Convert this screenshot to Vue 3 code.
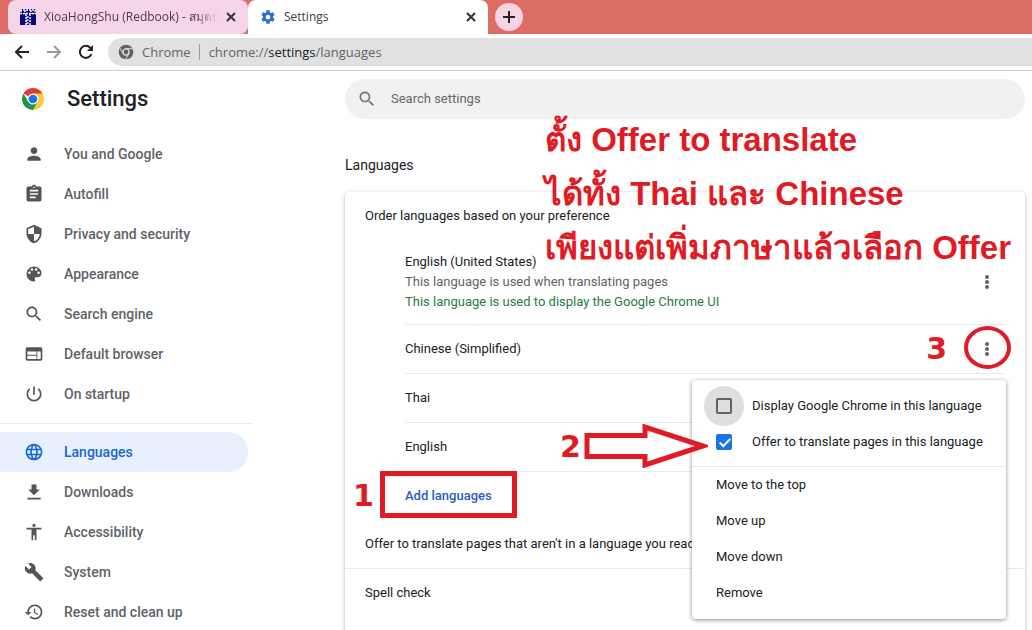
<script setup>
import { ref } from 'vue'

const primary = [
  { label: 'You and Google', d: 'M12 12c2.21 0 4-1.79 4-4s-1.79-4-4-4-4 1.79-4 4 1.79 4 4 4zm0 2c-2.67 0-8 1.34-8 4v2h16v-2c0-2.66-5.33-4-8-4z' },
  { label: 'Autofill', d: 'M19 3h-4.18C14.4 1.84 13.3 1 12 1c-1.3 0-2.4.84-2.82 2H5c-1.1 0-2 .9-2 2v14c0 1.1.9 2 2 2h14c1.1 0 2-.9 2-2V5c0-1.1-.9-2-2-2zm-7 0c.55 0 1 .45 1 1s-.45 1-1 1-1-.45-1-1 .45-1 1-1zm2 14H7v-2h7v2zm3-4H7v-2h10v2zm0-4H7V7h10v2z' },
  { label: 'Privacy and security', d: 'M12 1L3 5v6c0 5.55 3.84 10.74 9 12 5.16-1.26 9-6.45 9-12V5l-9-4zm0 10.99h7c-.53 4.12-3.28 7.79-7 8.94V12H5V6.3l7-3.11v8.8z' },
  { label: 'Appearance', d: 'M12 3c-4.97 0-9 4.03-9 9s4.03 9 9 9c.83 0 1.5-.67 1.5-1.5 0-.39-.15-.74-.39-1.01-.23-.26-.38-.61-.38-.99 0-.83.67-1.5 1.5-1.5H16c2.76 0 5-2.24 5-5 0-4.42-4.03-8-9-8zm-5.5 9c-.83 0-1.5-.67-1.5-1.5S5.67 9 6.500 9 8 9.67 8 10.500 7.330 12 6.500 12zm3-4C8.670 8 8 7.330 8 6.500S8.670 5 9.500 5s1.500.67 1.500 1.500S10.330 8 9.500 8zm5 0c-.83 0-1.500-.67-1.500-1.500S13.670 5 14.500 5s1.500.67 1.500 1.500S15.330 8 14.500 8zm3 4c-.83 0-1.500-.67-1.500-1.500S16.670 9 17.500 9s1.500.67 1.500 1.500-.67 1.500-1.500 1.500z' },
  { label: 'Search engine', d: 'M15.5 14h-.79l-.28-.27C15.41 12.59 16 11.11 16 9.5 16 5.91 13.09 3 9.5 3S3 5.91 3 9.5 5.91 16 9.5 16c1.61 0 3.09-.59 4.23-1.57l.27.28v.79l5 4.99L20.49 19l-4.99-5zm-6 0C7.01 14 5 11.99 5 9.5S7.01 5 9.5 5 14 7.01 14 9.5 11.99 14 9.500 14z' },
  { label: 'Default browser', d: 'M20 4H4c-1.100 0-1.990.9-1.990 2L2 18c0 1.100.9 2 2 2h16c1.100 0 2-.9 2-2V6c0-1.100-.9-2-2-2zm-5 14H4v-4h11v4zm0-5H4V9h11v4zm5 5h-4V9h4v9z' },
  { label: 'On startup', d: 'M13 3h-2v10h2V3zm4.830 2.170l-1.420 1.420C17.990 7.860 19 9.810 19 12c0 3.870-3.130 7-7 7s-7-3.130-7-7c0-2.190 1.010-4.140 2.580-5.420L6.170 5.170C4.230 6.820 3 9.260 3 12c0 4.970 4.030 9 9 9s9-4.030 9-9c0-2.740-1.230-5.180-3.170-6.830z' },
]
const advanced = [
  { label: 'Languages', active: true, d: 'M11.99 2C6.47 2 2 6.48 2 12s4.47 10 9.99 10C17.52 22 22 17.52 22 12S17.52 2 11.99 2zm6.93 6h-2.95c-.32-1.25-.78-2.45-1.38-3.56 1.84.63 3.37 1.91 4.33 3.56zM12 4.04c.83 1.2 1.48 2.53 1.91 3.96h-3.82c.43-1.43 1.08-2.76 1.91-3.96zM4.26 14C4.1 13.36 4 12.69 4 12s.1-1.36.26-2h3.380c-.08.66-.14 1.320-.14 2s.06 1.340.14 2H4.260zm.82 2h2.950c.32 1.250.78 2.450 1.380 3.560-1.840-.63-3.370-1.900-4.330-3.560zm2.950-8H5.080c.96-1.660 2.490-2.930 4.330-3.560C8.810 5.550 8.350 6.750 8.030 8zM12 19.960c-.83-1.200-1.480-2.530-1.910-3.960h3.820c-.43 1.430-1.080 2.760-1.910 3.960zM14.340 14H9.660c-.09-.66-.16-1.320-.16-2s.07-1.350.16-2h4.680c.09.65.16 1.320.16 2s-.07 1.340-.16 2zm.25 5.560c.6-1.110 1.060-2.310 1.380-3.560h2.950c-.96 1.650-2.490 2.930-4.330 3.560zM16.360 14c.08-.66.14-1.320.14-2s-.06-1.340-.14-2h3.380c.16.64.26 1.310.26 2s-.1 1.360-.26 2h-3.380z' },
  { label: 'Downloads', d: 'M19 9h-4V3H9v6H5l7 7 7-7zM4 19v2h16v-2H4z' },
  { label: 'Accessibility', d: 'M12 2c1.100 0 2 .9 2 2s-.9 2-2 2-2-.9-2-2 .9-2 2-2zm9 7h-6v13h-2v-6h-2v6H9V9H3V7h18v2z' },
  { label: 'System', d: 'M22.700 19l-9.100-9.100c.9-2.300.4-5-1.500-6.900-2-2-5-2.400-7.400-1.300L9 6 6 9 1.600 4.700C.4 7.100.9 10.100 2.900 12.100c1.900 1.900 4.600 2.400 6.900 1.500l9.100 9.100c.4.4 1 .4 1.400 0l2.300-2.300c.5-.4.5-1.100.1-1.400z' },
  { label: 'Reset and clean up', d: 'M13 3c-4.970 0-9 4.030-9 9H1l3.890 3.890.07.14L9 12H6c0-3.870 3.130-7 7-7s7 3.130 7 7-3.130 7-7 7c-1.930 0-3.680-.79-4.940-2.060l-1.420 1.420C8.270 19.990 10.510 21 13 21c4.970 0 9-4.030 9-9s-4.030-9-9-9zm-1 5v5l4.280 2.540.72-1.210-3.500-2.080V8H12z' },
]
const groups = [primary, advanced]
const languages = ['Chinese (Simplified)', 'Thai', 'English']
const actions = ['Move to the top', 'Move up', 'Move down', 'Remove']
const displayUi = ref(false)
const offer = ref(true)
const query = ref('')
</script>

<template>
  <div class="window">
    <header class="tabs">
      <div class="tab pink">
        <svg class="fav" viewBox="0 0 16 16"><path fill="#0a0a78" d="M0 0h16v16H0z"/><path fill="none" stroke="#fff" stroke-width="1.400" stroke-dasharray="2 1" d="M0 1h16M0 4.500h16M6 5v11M10 5v11M1 1v4M15 1v4M6.500 8h3M6.500 11h3M6.500 14h3M5 1v4M11 1v4"/></svg>
        <span class="title fade">XioaHongShu (Redbook) - สมุดบันทึก</span>
        <button class="close" aria-label="Close tab"><svg viewBox="0 0 10 10"><path d="M1 1l8 8M9 1L1 9"/></svg></button>
      </div>
      <div class="tab white">
        <svg class="fav" viewBox="0 0 24 24" fill="#2a6dd8"><path d="M19.430 12.980c.04-.32.07-.64.07-.98s-.03-.66-.07-.98l2.110-1.650c.19-.15.24-.42.12-.64l-2-3.460c-.12-.22-.39-.3-.61-.22l-2.490 1c-.52-.4-1.080-.73-1.690-.98l-.38-2.650C14.460 2.180 14.250 2 14 2h-4c-.25 0-.46.18-.49.42l-.38 2.650c-.61.25-1.170.59-1.690.98l-2.490-1c-.23-.09-.49 0-.61.22l-2 3.460c-.13.22-.07.49.12.64l2.110 1.650c-.04.32-.07.65-.07.98s.03.66.07.98l-2.110 1.650c-.19.15-.24.42-.12.64l2 3.460c.12.22.39.3.61.22l2.490-1c.52.4 1.080.73 1.690.98l.38 2.650c.03.24.24.42.49.42h4c.25 0 .46-.18.49-.42l.38-2.650c.61-.25 1.170-.59 1.690-.98l2.490 1c.23.09.49 0 .61-.22l2-3.460c.12-.22.07-.49-.12-.64l-2.110-1.650zM12 15.500c-1.930 0-3.500-1.570-3.500-3.500s1.570-3.500 3.500-3.500 3.500 1.570 3.500 3.500-1.570 3.500-3.500 3.500z"/></svg>
        <span class="title">Settings</span>
        <button class="close" aria-label="Close tab"><svg viewBox="0 0 10 10"><path d="M1 1l8 8M9 1L1 9"/></svg></button>
      </div>
      <button class="plus" aria-label="New tab"><svg viewBox="0 0 12 12"><path d="M6 0v12M0 6h12"/></svg></button>
    </header>

    <div class="toolbar">
      <button class="nav" aria-label="Back"><svg viewBox="0 0 16 16"><path d="M15 8H2M8 2L2 8l6 6"/></svg></button>
      <button class="nav off" aria-label="Forward"><svg viewBox="0 0 16 16"><path d="M1 8h13M8 2l6 6-6 6"/></svg></button>
      <button class="nav" aria-label="Reload"><svg viewBox="0 0 16 16"><path d="M13.400 10.200A6 6 0 1 1 12.300 3.800L14 5.500"/><path class="solid" d="M15 1v6H9z"/></svg></button>
      <div class="omnibox">
        <svg class="mono" viewBox="0 0 24 24"><circle cx="12" cy="12" r="11" fill="#5f6368"/><g stroke="#e1e1e1" stroke-width="1.500" fill="none"><path d="M12 7h10M7.700 14.500L2.700 6M16.300 14.500l-5 8.500"/></g><circle cx="12" cy="12" r="5.500" fill="#e1e1e1"/><circle cx="12" cy="12" r="3.600" fill="#5f6368"/></svg>
        <span>Chrome</span><i class="bar"></i>
        <span>chrome://<b>settings</b>/languages</span>
      </div>
    </div>

    <div class="page">
      <aside>
        <div class="brand">
          <svg viewBox="0 0 48 48"><circle cx="24" cy="24" r="22" fill="#fff"/><path fill="#e33b2e" d="M24 24L4.950 13A22 22 0 0 1 43.050 13z"/><path fill="#fcc934" d="M24 13h19.050A22 22 0 0 1 24 46l9.530-16.500z"/><path fill="#1e9548" d="M14.470 29.500L4.950 13A22 22 0 0 0 24 46l9.530-16.500z"/><circle cx="24" cy="24" r="11" fill="#fff"/><circle cx="24" cy="24" r="8.700" fill="#1a73e8"/></svg>
          <h1>Settings</h1>
        </div>
        <nav>
          <ul v-for="(g, i) in groups" :key="i">
            <li v-for="m in g" :key="m.label">
              <a href="#" :class="{ active: m.active }"><svg viewBox="0 0 24 24"><path :d="m.d"/></svg>{{ m.label }}</a>
            </li>
          </ul>
        </nav>
      </aside>

      <main>
        <label class="search">
          <svg viewBox="0 0 24 24"><path :d="primary[4].d"/></svg>
          <input v-model="query" type="text" placeholder="Search settings" aria-label="Search settings">
        </label>
        <h2>Languages</h2>
        <section class="card">
          <div class="row">Order languages based on your preference</div>
          <div class="list">
            <div class="lang first">
              <div>
                <p>English (United States)</p>
                <p class="grey">This language is used when translating pages</p>
                <p class="green">This language is used to display the Google Chrome UI</p>
              </div>
              <button class="dots" aria-label="More actions"><svg viewBox="0 0 4 14"><circle cx="2" cy="2" r="2"/><circle cx="2" cy="7" r="2"/><circle cx="2" cy="12" r="2"/></svg></button>
            </div>
            <div v-for="(l, i) in languages" :key="l" class="lang">
              <p>{{ l }}</p>
              <button v-if="i === 0" class="dots" aria-label="More actions"><svg viewBox="0 0 4 14"><circle cx="2" cy="2" r="2"/><circle cx="2" cy="7" r="2"/><circle cx="2" cy="12" r="2"/></svg></button>
            </div>
            <div class="lang"><button class="add">Add languages</button></div>
          </div>
          <div class="row">Offer to translate pages that aren't in a language you read</div>
          <div class="row line">Spell check</div>

          <div class="menu">
            <label class="check"><span class="halo"><input v-model="displayUi" type="checkbox"></span>Display Google Chrome in this language</label>
            <label class="check"><span><input v-model="offer" type="checkbox"></span>Offer to translate pages in this language</label>
            <hr>
            <button v-for="a in actions" :key="a">{{ a }}</button>
          </div>
        </section>

        <div class="note words">
          <div>ตั้ง Offer to translate</div>
          <div>ได้ทั้ง Thai และ Chinese</div>
          <div>เพียงแต่เพิ่มภาษาแล้วเลือก Offer</div>
        </div>
        <div class="note digit one">1</div>
        <div class="note box"></div>
        <div class="note digit two">2</div>
        <svg class="note arrow" viewBox="0 0 124 44"><path d="M3 11.500H61V3L119 22 61 41V32.500H3z"/></svg>
        <div class="note digit three">3</div>
        <div class="note ring"></div>
      </main>
    </div>
  </div>
</template>

<style>
body { background: #fff; }
</style>

<style scoped>
* { box-sizing: border-box; }
.window { height: 100vh; overflow: hidden; display: flex; flex-direction: column; font: 13px/20px Roboto, sans-serif; color: #202124; background: #fff; }
button { border: 0; background: none; padding: 0; font: inherit; color: inherit; display: flex; align-items: center; justify-content: center; }
h1, h2, p, ul { margin: 0; padding: 0; font-weight: 400; }
li { list-style: none; }
svg { display: block; flex: none; }

.tabs { height: 34px; flex: none; display: flex; background: #dc6c64; padding-left: 8px; font: 12px/16px "Open Sans", sans-serif; }
.tab { width: 240px; display: flex; align-items: center; padding: 0 11px 0 12px; border-radius: 8px 8px 0 0; }
.pink { background: #f6d5e8; color: #4b3a45; border-radius: 8px; }
.white { background: #fff; color: #3c4043; }
.fav { width: 16px; height: 16px; margin-right: 8px; }
.title { flex: 1; overflow: hidden; white-space: nowrap; }
.fade { margin-right: 6px; mask-image: linear-gradient(90deg, #000 85%, transparent); }
.close { width: 12px; height: 16px; }
.close svg { width: 10px; height: 10px; stroke: #333; stroke-width: 2; fill: none; }
.plus { width: 28px; height: 28px; margin: 3px 7px; border-radius: 50%; background: #f8d3e4; }
.plus svg { width: 12px; height: 12px; stroke: #222; stroke-width: 2; }

.toolbar { height: 37px; flex: none; display: flex; align-items: center; gap: 16px; padding-left: 14px; border-bottom: 1px solid #cfcfcf; }
.nav { width: 16px; height: 16px; }
.nav svg { width: 16px; height: 16px; fill: none; stroke: #222; stroke-width: 2; }
.nav .solid { fill: #222; stroke: none; }
.nav.off svg { stroke: #999; }
.omnibox { flex: 1; min-width: 0; height: 28px; display: flex; align-items: center; margin-left: -2px; padding-left: 10px; border-radius: 14px 0 0 14px; background: #e1e1e1; color: #5f6368; font: 13px/20px "Open Sans", sans-serif; }
.mono { width: 16px; height: 16px; margin-right: 8px; }
.bar { width: 1px; height: 16px; margin: 0 9px 0 8px; background: #999; }
.omnibox b { font-weight: 400; color: #202124; }

.page { flex: 1; min-height: 0; display: flex; }
aside { width: 265px; flex: none; }
.brand { height: 56px; display: flex; align-items: center; padding-left: 21px; gap: 22px; }
.brand svg { width: 24px; height: 24px; }
h1 { font-size: 22px; line-height: 28px; font-weight: 500; }
nav { padding-top: 7px; }
ul + ul { border-top: 1px solid #e8eaed; margin: 9px 12px 0 0; padding-top: 8px; }
li a { height: 40px; width: 248px; display: flex; align-items: center; gap: 20px; padding-left: 24px; border-radius: 0 20px 20px 0; color: #5f6368; text-decoration: none; font-weight: 500; font-size: 14px; }
li svg { width: 20px; height: 20px; fill: #555; }
li .active { background: #e8f0fe; color: #1967d2; }
.active svg { fill: #1967d2; }

main { position: relative; flex: 1; min-width: 0; padding: 8px 7px 0 80px; display: flex; flex-direction: column; }
.search { height: 40px; flex: none; display: flex; align-items: center; gap: 14px; padding-left: 12px; border-radius: 20px; background: #f1f1f1; }
.search svg { width: 20px; height: 20px; fill: #777; }
.search input { flex: 1; border: 0; padding: 0; outline: 0; background: none; font: inherit; }
.search input::placeholder { color: #666; opacity: 1; }
h2 { font-size: 14px; line-height: 20px; margin: 36px 0 17px; }
.card { position: relative; flex: 1 0 auto; padding-bottom: 24px; border-radius: 4px; box-shadow: 0 1px 2px rgba(60, 64, 67, .3), 0 1px 4px 1px rgba(60, 64, 67, .15); }
.row { height: 48px; padding: 0 20px; display: flex; align-items: center; }
.line { height: 49px; border-top: 1px solid #e8eaed; }
.list { padding: 0 20px 0 60px; }
.lang { height: 49px; border-top: 1px solid #e8eaed; display: flex; align-items: center; justify-content: space-between; }
.first { height: 84px; border: 0; }
.grey { color: #5f6368; }
.green { color: #2b7a45; }
.dots { width: 36px; height: 36px; }
.dots svg { width: 4px; height: 14px; fill: #5f6368; }
.add { color: #2a5bc4; font-weight: 500; }
.menu { position: absolute; right: 19px; top: 188px; width: 314px; padding: 8px 0; background: #fff; border-radius: 4px; box-shadow: 0 1px 4px rgba(0, 0, 0, .45); }
.menu > * { height: 36px; width: 100%; display: flex; align-items: center; justify-content: flex-start; padding-left: 24px; }
.menu hr { height: 1px; margin: 6px 0 0; padding: 0; border: 0; background: #e8eaed; }
.menu .check { padding-left: 12px; gap: 8px; }
.check span { width: 40px; height: 40px; flex: none; border-radius: 50%; display: flex; align-items: center; justify-content: center; }
.check .halo { background: #dedede; }
.check input { appearance: none; width: 16px; height: 16px; margin: 0; border: 2px solid #5f6368; border-radius: 2px; }
.check input:checked { position: relative; border-color: #1a73e8; background: #1a73e8; }
.check input:checked::after { content: ""; position: absolute; left: 4px; top: 0; width: 4px; height: 9px; border: solid #fff; border-width: 0 2px 2px 0; transform: rotate(45deg); }

.note { position: absolute; pointer-events: none; color: #e01b24; font: bold 33px/54px "Liberation Sans", sans-serif; white-space: nowrap; }
.words { left: 280px; top: 42px; }
.digit { font: bold 30px/54px "DejaVu Sans", sans-serif; }
.one { left: 88px; top: 398px; }
.two { left: 295px; top: 349px; }
.three { right: 85px; top: 251px; }
.box { left: 115px; top: 400px; width: 137px; height: 47px; border: 5px solid #e01b24; }
.arrow { left: 319px; top: 353px; width: 124px; height: 44px; fill: none; stroke: #e01b24; stroke-width: 5; }
.ring { right: 21px; top: 255px; width: 47px; height: 43px; border: 4px solid #e01b24; border-radius: 50%; }
</style>
